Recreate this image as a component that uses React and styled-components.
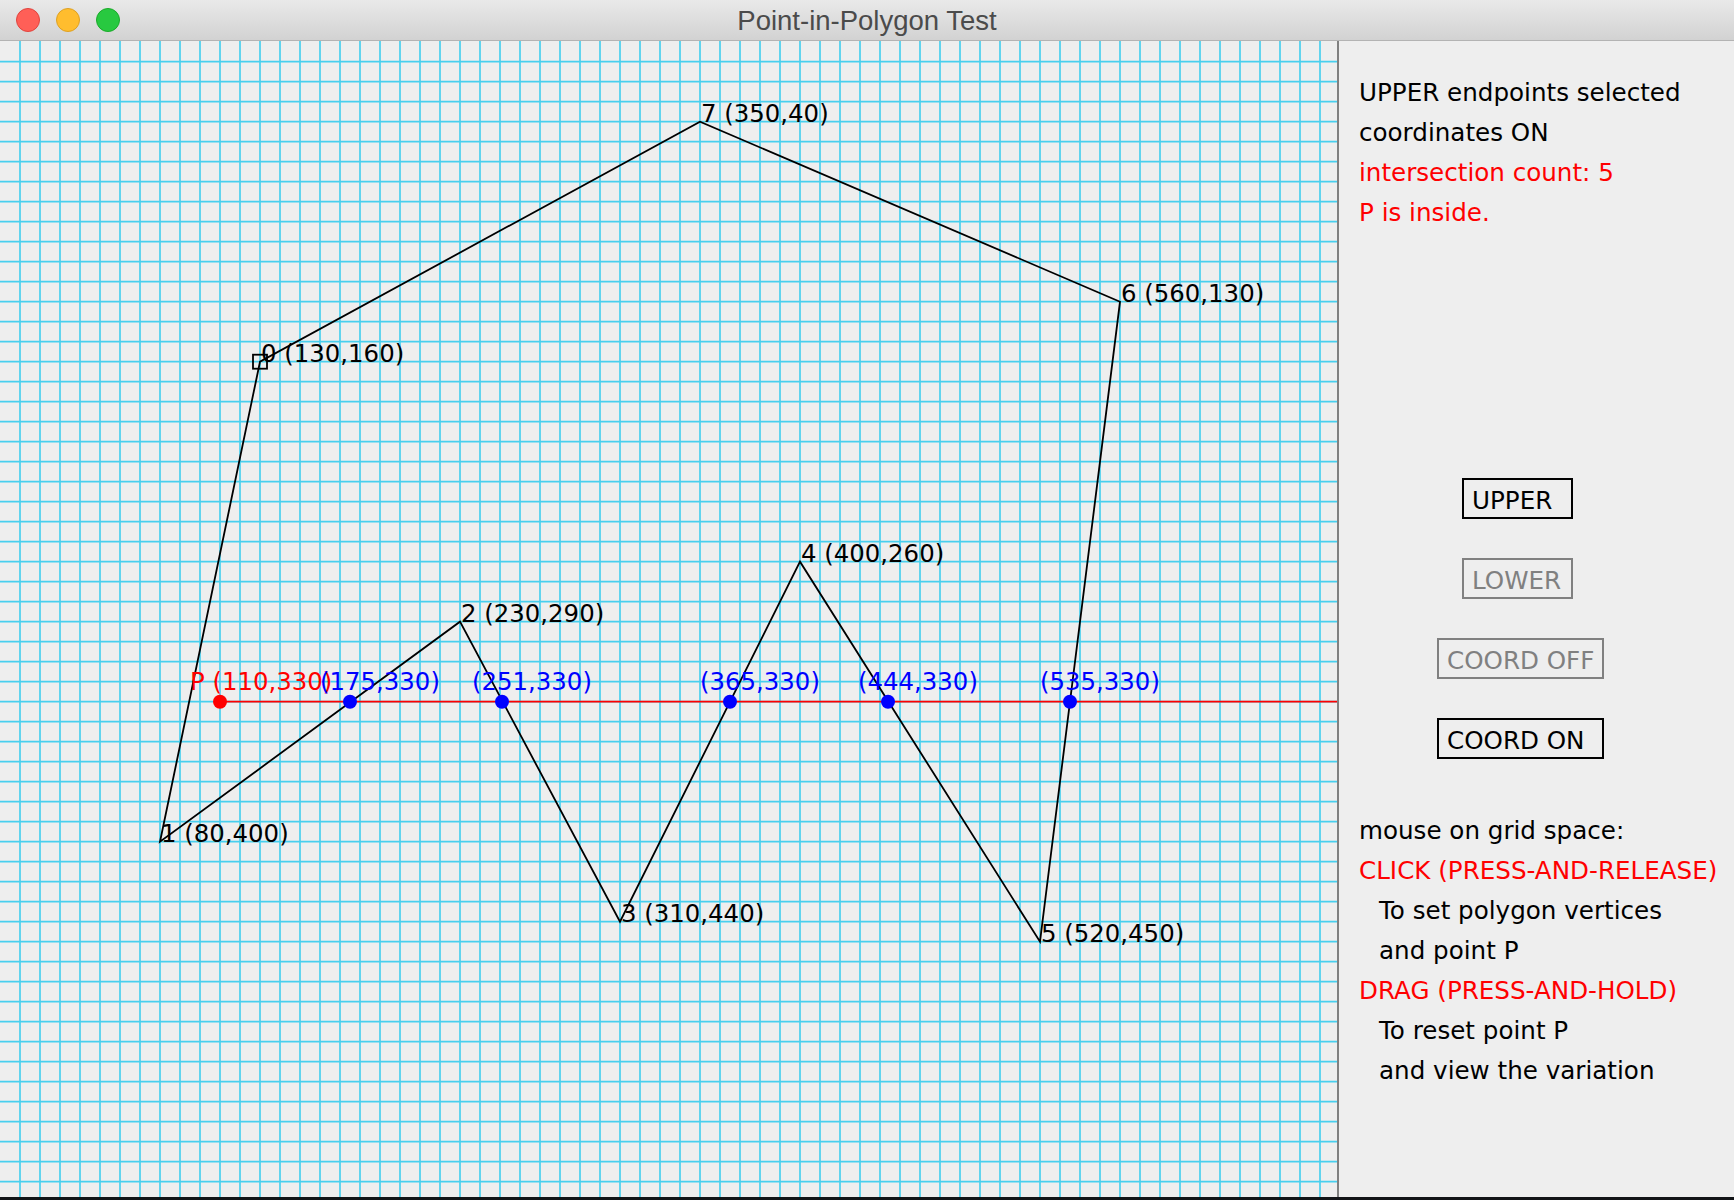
import styled, { createGlobalStyle } from "styled-components";

const GlobalStyle = createGlobalStyle`
  html, body {
    margin: 0;
    padding: 0;
    background: #121417;
  }
  body {
    width: 1734px;
    height: 1200px;
    overflow: hidden;
  }
`;

const Window = styled.div`
  width: 1734px;
  height: 1197px;
  display: flex;
  flex-direction: column;
  background: #eeeeee;
  font-family: "DejaVu Sans", "Liberation Sans", sans-serif;
`;

const TitleBar = styled.div`
  height: 40px;
  flex: none;
  display: flex;
  align-items: center;
  justify-content: center;
  position: relative;
  background: linear-gradient(#e9e9e9, #d2d2d2);
  border-bottom: 1px solid #b3b3b3;
`;

const Lights = styled.div`
  position: absolute;
  left: 16px;
  top: 8px;
  display: flex;
  gap: 16px;
`;

const Light = styled.span`
  width: 22px;
  height: 22px;
  border-radius: 50%;
  background: ${(p) => p.$fill};
  border: 1px solid ${(p) => p.$edge};
`;

const Title = styled.div`
  font-family: "Liberation Sans", Arial, sans-serif;
  font-size: 27.5px;
  color: #4b4b4b;
  margin-top: 2px;
`;

const Content = styled.div`
  flex: 1;
  display: flex;
  min-height: 0;
`;

const Canvas = styled.svg`
  display: block;
  width: 1337px;
  height: 1156px;
  flex: none;
  border-right: 2px solid #808080;
  font-family: "DejaVu Sans", sans-serif;
  font-size: 24.4px;
`;

const Panel = styled.div`
  flex: 1;
  display: flex;
  flex-direction: column;
  padding: 32px 0 0 20px;
  font-size: 24.6px;
  line-height: 40px;
`;

const Line = styled.div`
  color: ${(p) => (p.$red ? "#ff0000" : "#000000")};
  padding-left: ${(p) => (p.$indent ? "20px" : "0")};
  white-space: nowrap;
`;

const Buttons = styled.div`
  display: flex;
  flex-direction: column;
  gap: 39px;
  margin-top: 245px;
  margin-bottom: 52px;
`;

const Button = styled.div`
  box-sizing: border-box;
  width: ${(p) => p.$w}px;
  height: 41px;
  margin-left: ${(p) => p.$left}px;
  padding: 4px 0 0 8px;
  line-height: 33px;
  border: 2px solid ${(p) => (p.$off ? "#808080" : "#000000")};
  color: ${(p) => (p.$off ? "#808080" : "#000000")};
  white-space: nowrap;
`;

const GRID = "#48cfee";
const W = 1337;
const H = 1156;

const sx = (x) => x * 2;
const sy = (y) => y * 2 + 0.7;

const vertices = [
  [130, 160],
  [80, 400],
  [230, 290],
  [310, 440],
  [400, 260],
  [520, 450],
  [560, 130],
  [350, 40],
];

const hits = [175, 251, 365, 444, 535];
const P = [110, 330];

const vLines = [];
for (let x = 20; x < W; x += 20) vLines.push(x);
const hLines = [];
for (let y = 20.7; y < H; y += 20) hLines.push(y);

const Drawing = () => {
  const pts = vertices.map(([x, y]) => `${sx(x)},${sy(y)}`).join(" ");
  return (
    <Canvas viewBox={`0 0 ${W} ${H}`}>
      <rect width={W} height={H} fill="#eeeeee" />
      {vLines.map((x) => (
        <line key={"v" + x} x1={x} y1={0} x2={x} y2={H} stroke={GRID} strokeWidth="1.7" />
      ))}
      {hLines.map((y) => (
        <line key={"h" + y} x1={0} y1={y} x2={W} y2={y} stroke={GRID} strokeWidth="1.7" />
      ))}
      <polygon points={pts} fill="none" stroke="#000" strokeWidth="1.8" />
      <rect
        x={sx(130) - 7}
        y={sy(160) - 7}
        width="14"
        height="14"
        fill="none"
        stroke="#000"
        strokeWidth="1.8"
      />
      {vertices.map(([x, y], i) => (
        <text key={"t" + i} x={sx(x) + 1} y={sy(y)} fill="#000">
          {`${i} (${x},${y})`}
        </text>
      ))}
      <line x1={sx(P[0])} y1={sy(P[1])} x2={W} y2={sy(P[1])} stroke="#ff0000" strokeWidth="1.8" />
      <circle cx={sx(P[0])} cy={sy(P[1])} r="7" fill="#ff0000" />
      <text x={sx(P[0]) - 30} y={sy(P[1]) - 12} fill="#ff0000">
        {`P (${P[0]},${P[1]})`}
      </text>
      {hits.map((x) => (
        <g key={"b" + x}>
          <circle cx={sx(x)} cy={sy(330)} r="7" fill="#0000ff" />
          <text x={sx(x) - 30} y={sy(330) - 12} fill="#0000ff">
            {`(${x},330)`}
          </text>
        </g>
      ))}
    </Canvas>
  );
};

const App = () => {
  return (
    <>
      <GlobalStyle />
      <Window>
        <TitleBar>
          <Lights>
            <Light $fill="#ff5f57" $edge="#e0443e" />
            <Light $fill="#ffbd2e" $edge="#dea123" />
            <Light $fill="#28c940" $edge="#1aab29" />
          </Lights>
          <Title>Point-in-Polygon Test</Title>
        </TitleBar>
        <Content>
          <Drawing />
          <Panel>
            <Line>UPPER endpoints selected</Line>
            <Line>coordinates ON</Line>
            <Line $red>intersection count: 5</Line>
            <Line $red>P is inside.</Line>
            <Buttons>
              <Button $w={111} $left={103}>UPPER</Button>
              <Button $w={111} $left={103} $off>LOWER</Button>
              <Button $w={167} $left={78} $off>COORD OFF</Button>
              <Button $w={167} $left={78}>COORD ON</Button>
            </Buttons>
            <Line>mouse on grid space:</Line>
            <Line $red>CLICK (PRESS-AND-RELEASE)</Line>
            <Line $indent>To set polygon vertices</Line>
            <Line $indent>and point P</Line>
            <Line $red>DRAG (PRESS-AND-HOLD)</Line>
            <Line $indent>To reset point P</Line>
            <Line $indent>and view the variation</Line>
          </Panel>
        </Content>
      </Window>
    </>
  );
};

export default App;
